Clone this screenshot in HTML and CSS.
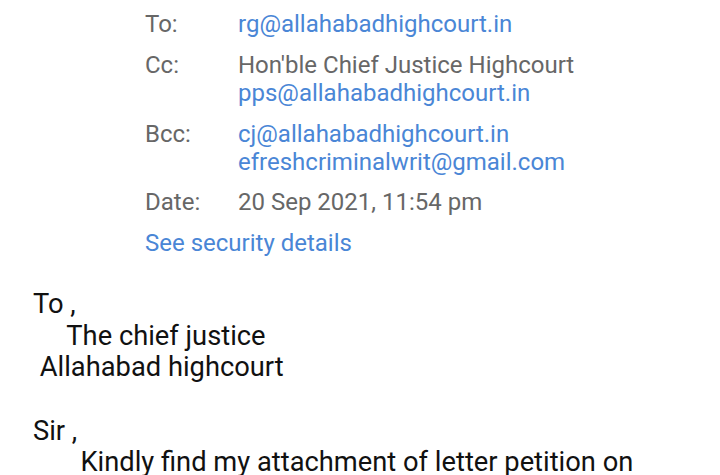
FILE: index.html
```html
<!DOCTYPE html>
<html lang="en">
<head>
  <meta charset="UTF-8" />
  <meta name="viewport" content="width=device-width, initial-scale=1.0" />
  <title>Message details</title>
  <link rel="stylesheet" href="styles.css">
</head>
<body>
  <div class="details">
    <div class="row">
      <span class="label">To:</span>
      <div class="value"><span class="link">rg@allahabadhighcourt.in</span></div>
    </div>
    <div class="row">
      <span class="label">Cc:</span>
      <div class="value">
        <span>Hon'ble Chief Justice Highcourt</span>
        <span class="link">pps@allahabadhighcourt.in</span>
      </div>
    </div>
    <div class="row">
      <span class="label">Bcc:</span>
      <div class="value">
        <span class="link">cj@allahabadhighcourt.in</span>
        <span class="link">efreshcriminalwrit@gmail.com</span>
      </div>
    </div>
    <div class="row">
      <span class="label">Date:</span>
      <div class="value"><span>20 Sep 2021, 11:54 pm</span></div>
    </div>
    <a class="security" href="#">See security details</a>
  </div>

  <div class="message">To ,
     The chief justice
 Allahabad highcourt

Sir ,
       Kindly find my attachment of letter petition on</div>
</body>
</html>
```

FILE: styles.css
```css
body {
  margin: 0;
  padding: 0;
  background: #fff;
  font-family: Roboto, "Noto Sans", sans-serif;
  overflow: hidden;
}
.details {
  display: flex;
  flex-direction: column;
  gap: 12.8px;
  padding: 10px 0 0 145px;
  font-size: 24px;
  line-height: 28px;
  color: #676767;
}
.row {
  display: flex;
}
.label {
  width: 93px;
  flex-shrink: 0;
}
.value {
  display: flex;
  flex-direction: column;
}
.link {
  color: #4a86d6;
}
.security {
  color: #4a86d6;
  text-decoration: none;
}
.message {
  white-space: pre;
  margin: 32px 0 0 33px;
  font-size: 27.3px;
  line-height: 31.6px;
  color: #111;
}
```
